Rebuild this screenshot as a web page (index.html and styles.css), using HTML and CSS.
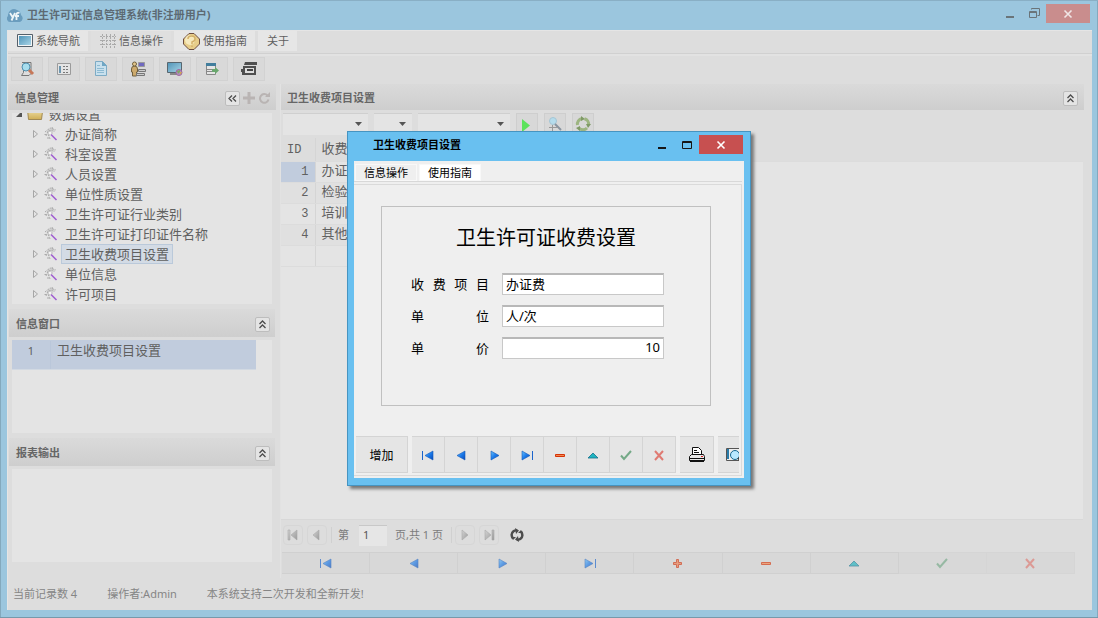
FILE: index.html
```html
<!DOCTYPE html>
<html lang="zh-CN">
<head>
<meta charset="utf-8">
<meta name="viewport" content="width=device-width, initial-scale=1">
<title>卫生许可证信息管理系统</title>
<link rel="stylesheet" href="styles.css">
</head>
<body>
<svg class="sprite" aria-hidden="true">
  <defs>
    <linearGradient id="blue" x1="0" y1="0" x2="1" y2="1"><stop offset="0" stop-color="#6cc4ff"/><stop offset=".5" stop-color="#1c7bea"/><stop offset="1" stop-color="#0a4ab8"/></linearGradient>
    <linearGradient id="screen" x1="0" y1="0" x2="1" y2="1"><stop offset="0" stop-color="#4f94b8"/><stop offset="1" stop-color="#a9d4e6"/></linearGradient>
    <linearGradient id="silver" x1="0" y1="0" x2="1" y2="1"><stop offset="0" stop-color="#d4d4d4"/><stop offset="1" stop-color="#9a9a9a"/></linearGradient>
    <linearGradient id="folder" x1="0" y1="0" x2="0" y2="1"><stop offset="0" stop-color="#efe0a8"/><stop offset="1" stop-color="#cfae55"/></linearGradient>
  </defs>
  <symbol id="first" viewBox="0 0 12 12"><path fill="#1a64cc" d="M0 2h1v9H0z"/><path fill="url(#blue)" stroke="#1358b8" stroke-width=".6" d="M11 2v9L3 6.500z"/></symbol>
  <symbol id="prev" viewBox="0 0 12 12"><path fill="url(#blue)" stroke="#1358b8" stroke-width=".6" d="M10 2v9L2 6.500z"/></symbol>
  <symbol id="next" viewBox="0 0 12 12"><path fill="url(#blue)" stroke="#1358b8" stroke-width=".6" d="M3 2v9L11 6.500z"/></symbol>
  <symbol id="last" viewBox="0 0 12 12"><path fill="#1a64cc" d="M11 2h1v9h-1z"/><path fill="url(#blue)" stroke="#1358b8" stroke-width=".6" d="M1 2v9l8-4.500z"/></symbol>
  <symbol id="plus" viewBox="0 0 12 12"><path fill="#f0804f" stroke="#cf3410" d="M4.500 2.500h2v3h3v2h-3v3h-2v-3h-3v-2h3z"/></symbol>
  <symbol id="minus" viewBox="0 0 12 12"><path fill="#f58a4f" stroke="#d43308" d="M1.500 5.500h9v2h-9z"/></symbol>
  <symbol id="up" viewBox="0 0 12 12"><path fill="#1fb4c0" stroke="#14708c" stroke-width=".8" d="M1 9L6 4l5 5z"/></symbol>
  <symbol id="check" viewBox="0 0 12 12"><path fill="none" stroke="#74a987" stroke-width="2" d="M1 6.500l3 3.500 7-8"/></symbol>
  <symbol id="cross" viewBox="0 0 12 12"><path fill="none" stroke="#df7a72" stroke-width="2" d="M2 2l8 9M10 2l-8 9"/></symbol>
  <symbol id="close" viewBox="0 0 10 10"><path fill="none" stroke="currentColor" stroke-width="1.600" d="M1.500 1.500l7 7M8.500 1.500l-7 7"/></symbol>
  <symbol id="minimize" viewBox="0 0 10 10"><path fill="currentColor" d="M1 7h8v2H1z"/></symbol>
  <symbol id="collapse" viewBox="0 0 9 9"><path fill="none" stroke="#4c4c4c" stroke-width="1.300" d="M1.500 4L4.500 1l3 3M1.500 8L4.500 5l3 3"/></symbol>
  <symbol id="wand" viewBox="0 0 16 16"><path fill="#d0d0d0" d="M5 3h4v1h3v2h-2v2H7v2H5V8H4V5h1z"/><path fill="none" stroke="#aaa" stroke-dasharray="2 1" d="M2 6l5-4 6 2M3 10l2-5 5-1M7 13l-2-5M1.500 8.500h2M4 12h2M9 1l1 3"/><path stroke="#a05fd0" stroke-width="1.600" d="M8 8.500l5.500 5.500"/><path fill="#f4f4f4" d="M6 6h2v2H6z"/></symbol>
  <symbol id="arrow" viewBox="0 0 8 8"><path fill="none" stroke="#a6a6a6" d="M2.500.5v7l4-3.500z"/></symbol>
  <symbol id="combo" viewBox="0 0 9 5"><path fill="#555" d="M1 0h7L4.500 4z"/></symbol>
</svg>

<div class="window">
  <header class="titlebar">
    <svg class="app-logo" viewBox="0 0 16 14" aria-hidden="true"><path fill="#6a9dbe" d="M3 13a3.500 3.500 0 0 1-2-6 6 6 0 0 1 9-6 6 6 0 0 1 4 5 4 4 0 0 1-1 7z"/><path fill="none" stroke="#edf5f8" stroke-width="1.800" d="M3 4l2.500 4M8 4L4.500 11.500M12.500 4q-3-1-3 2v5M8 7h4"/></svg>
    <h1>卫生许可证信息管理系统(非注册用户)</h1>
    <div class="caption">
      <button aria-label="最小化"><svg width="10" height="10"><use href="#minimize"/></svg></button>
      <button aria-label="还原"><svg width="11" height="11" viewBox="0 0 11 11"><path fill="none" stroke="currentColor" d="M.5 3.500h7v6h-7zM.5 4.500h7M2.500 1.500V.5h8v7h-2"/></svg></button>
      <button class="close" aria-label="关闭"><svg width="10" height="10"><use href="#close"/></svg></button>
    </div>
  </header>

  <div class="client">
    <nav class="menu">
      <button><svg width="16" height="14" viewBox="0 0 16 14"><path fill="#f5f5f5" stroke="#55606a" d="M.5.5h15v12H.5z"/><path fill="url(#screen)" d="M2 2h12v9H2z"/></svg>系统导航</button>
      <button class="active"><svg width="16" height="14" viewBox="0 0 16 14"><path fill="none" stroke="#aaa" stroke-dasharray="2 1" d="M2.500 0v14M6.500 0v14M10.500 0v14M14.500 0v14M0 2.500h16M0 6.500h16M0 10.500h16"/></svg>信息操作</button>
      <button><svg width="17" height="17" viewBox="0 0 17 17"><path fill="#e7cd8a" stroke="#6c4d40" d="M6 .5h5L16.500 6v5L11 16.500H6L.5 11V6z"/><circle cx="7" cy="7" r="5" fill="#f6e9bd"/><path fill="none" stroke="#d3b069" stroke-width="1.500" d="M5 6q0-3 3.500-3T12 6q0 2-3 3v2M9 12.500V14"/></svg>使用指南</button>
      <button>关于</button>
    </nav>

    <div class="toolbar">
      <button aria-label="查询"><svg viewBox="0 0 16 16"><path fill="#ddd" stroke="#777" d="M3 1.500h9v11l-2 2H2.500l2-3V3"/><circle cx="7" cy="6" r="4" fill="#a7dded" stroke="#4f8fae"/><path stroke="#c67859" stroke-width="3" d="M10 9l4 4"/></svg></button>
      <button aria-label="列表"><svg viewBox="0 0 16 16"><path fill="#e4e4e4" stroke="#9b9b9b" d="M1.500 2.500h13v11h-13z"/><path fill="#6d96af" d="M3 5h2v7H3z"/><path stroke="#777" stroke-dasharray="2 1" d="M7 5.500h6M7 8.500h6M7 11.500h6"/></svg></button>
      <button aria-label="文档"><svg viewBox="0 0 16 16"><path fill="#c8e0ed" stroke="#7dabc5" d="M2.500.5h7l4 4v10h-11z"/><path fill="#6fa6c4" d="M9 0l5 5H9z"/><path stroke="#8dbad2" d="M4 4.500h3M4 7.500h7M4 9.500h7M4 11.500h7"/></svg></button>
      <button aria-label="人员"><svg viewBox="0 0 16 16"><path fill="#cdaa6d" stroke="#71613f" d="M1.500 8q0-3 3-3t3 3v3h-1v4h-4v-4h-1z"/><circle cx="4.500" cy="3" r="2" fill="#e2c58a" stroke="#71613f"/><path fill="#7069c0" stroke="#999" d="M8.500 1.500h6v4h-6z"/><path fill="#ccc" stroke="#777" d="M8.500 8.500h7v2h-7zM6.500 12.500h8v2h-8z"/></svg></button>
      <button aria-label="网络"><svg viewBox="0 0 16 16"><path fill="url(#screen)" stroke="#58666f" d="M.5 1.500h14v10H.5z"/><path stroke="#888" stroke-width="2" d="M3 13h7"/><circle cx="12" cy="11.500" r="3" fill="#b28cc2" stroke="#9d679f"/><path fill="#7ea761" d="M10 10l3-1v2l-2 2z"/><path fill="#d1a750" d="M13 11h2l-2 3z"/></svg></button>
      <button aria-label="导出"><svg viewBox="0 0 16 16"><path fill="#e5e5e5" stroke="#888" d="M2.500 2.500h9v11h-9z"/><path fill="#427e9d" d="M2 2h10v3H2z"/><path stroke="#888" d="M3 8.500h5M3 10.500h5"/><path fill="#69a66d" d="M8 8h3V6l4 3.500-4 3.500v-2H8z"/></svg></button>
      <button aria-label="打印"><svg viewBox="0 0 16 16"><path fill="#4f4f4f" d="M4 1h12v3H3zM2 5h13v9H1v-3H0V8h2z"/><path fill="#ddd" d="M4 7h9v5H4z"/><path fill="#444" d="M6 8h6v2H6z"/></svg></button>
    </div>

    <main class="workspace">
      <aside class="sidebar">
        <section class="panel tree-panel">
          <div class="panel-head main-head"><h2>信息管理</h2>
            <div class="head-tools">
              <button class="mini" aria-label="收起"><svg width="9" height="9" viewBox="0 0 9 9"><path fill="none" stroke="#4c4c4c" stroke-width="1.300" d="M4 1.500l-3 3 3 3M8 1.500l-3 3 3 3"/></svg></button>
              <button class="bare" aria-label="添加"><svg width="12" height="12" viewBox="0 0 12 12"><path stroke="#b9b4b3" stroke-width="3" d="M6 0v12M0 6h12"/></svg></button>
              <button class="bare" aria-label="刷新"><svg width="12" height="12" viewBox="0 0 12 12"><path fill="none" stroke="#b9b4b3" stroke-width="2" d="M9.500 3.500a4.300 4.300 0 1 0 1 4"/><path fill="#b9b4b3" d="M7 5l5-5v5z"/></svg></button>
            </div>
          </div>
          <div class="panel-body tree-body">
            <ul class="tree">
              <li class="root"><svg class="root-arrow" viewBox="0 0 8 8"><path fill="#555" d="M7 1v6H1z"/></svg><svg class="node-icon" viewBox="0 0 16 16"><path fill="url(#folder)" stroke="#a08954" d="M.5 3.500h5l1 2h9l-1 8h-13z"/></svg><span>数据设置</span></li>
              <li><svg class="arrow"><use href="#arrow"/></svg><svg class="node-icon"><use href="#wand"/></svg><span>办证简称</span></li>
              <li><svg class="arrow"><use href="#arrow"/></svg><svg class="node-icon"><use href="#wand"/></svg><span>科室设置</span></li>
              <li><svg class="arrow"><use href="#arrow"/></svg><svg class="node-icon"><use href="#wand"/></svg><span>人员设置</span></li>
              <li><svg class="arrow"><use href="#arrow"/></svg><svg class="node-icon"><use href="#wand"/></svg><span>单位性质设置</span></li>
              <li><svg class="arrow"><use href="#arrow"/></svg><svg class="node-icon"><use href="#wand"/></svg><span>卫生许可证行业类别</span></li>
              <li><svg class="arrow"></svg><svg class="node-icon"><use href="#wand"/></svg><span>卫生许可证打印证件名称</span></li>
              <li><svg class="arrow"><use href="#arrow"/></svg><svg class="node-icon"><use href="#wand"/></svg><span class="selected">卫生收费项目设置</span></li>
              <li><svg class="arrow"><use href="#arrow"/></svg><svg class="node-icon"><use href="#wand"/></svg><span>单位信息</span></li>
              <li><svg class="arrow"><use href="#arrow"/></svg><svg class="node-icon"><use href="#wand"/></svg><span>许可项目</span></li>
            </ul>
          </div>
        </section>
        <section class="panel">
          <div class="panel-head sub-head"><h2>信息窗口</h2><button class="mini" aria-label="折叠"><svg width="9" height="9"><use href="#collapse"/></svg></button></div>
          <div class="panel-body"><div class="info-row"><span class="info-no">1</span><span class="info-name">卫生收费项目设置</span></div></div>
        </section>
        <section class="panel">
          <div class="panel-head sub-head"><h2>报表输出</h2><button class="mini" aria-label="折叠"><svg width="9" height="9"><use href="#collapse"/></svg></button></div>
          <div class="panel-body"></div>
        </section>
      </aside>

      <section class="content">
        <div class="panel-head main-head"><h2>卫生收费项目设置</h2><button class="mini" aria-label="折叠"><svg width="9" height="9"><use href="#collapse"/></svg></button></div>
        <div class="filters">
          <div class="combo combo-field"><select aria-label="字段"><option></option></select><svg><use href="#combo"/></svg></div>
          <div class="combo combo-op"><select aria-label="条件"><option></option></select><svg><use href="#combo"/></svg></div>
          <div class="combo combo-value"><select aria-label="值"><option></option></select><svg><use href="#combo"/></svg></div>
          <button aria-label="执行"><svg viewBox="0 0 16 16"><path fill="#5be35b" d="M3 3l8 6.500L3 16z"/></svg></button>
          <button aria-label="查找"><svg viewBox="0 0 16 16"><circle cx="6" cy="5" r="3.500" fill="#b5dcec" stroke="#a5c5d4"/><path stroke="#8894a0" stroke-width="2" d="M8 8l6 6"/><path stroke="#999" d="M5.500 9v6M2 11.500h9"/></svg></button>
          <button aria-label="刷新"><svg viewBox="0 0 16 16"><g fill="none" stroke="#9db581" stroke-width="3"><path d="M2.500 9A5.500 5.500 0 0 1 7 2.500M9.500 2.700A5.500 5.500 0 0 1 13.500 9M12 12a5.500 5.500 0 0 1-8 0"/></g><path fill="#7f9a66" d="M6 0l4 3-4 2zM16 8l-3 4-2-4zM5 10v5l-4-3z"/></svg></button>
        </div>
        <div class="grid">
          <table>
            <thead><tr><th class="id">ID</th><th class="name">收费</th><th class="rest"></th></tr></thead>
            <tbody>
              <tr><td class="id current">1</td><td>办证</td><td class="rest"></td></tr>
              <tr><td class="id">2</td><td>检验</td><td class="rest"></td></tr>
              <tr><td class="id">3</td><td>培训</td><td class="rest"></td></tr>
              <tr><td class="id">4</td><td>其他</td><td class="rest"></td></tr>
              <tr><td class="id"></td><td></td><td class="rest"></td></tr>
            </tbody>
          </table>
        </div>
        <div class="pager">
          <button aria-label="首页" disabled><svg viewBox="0 0 12 12"><path fill="url(#silver)" stroke="#aaa" stroke-width=".6" d="M1 1h2v10H1zM10 1v10L4 6z"/></svg></button>
          <button aria-label="上页" disabled><svg viewBox="0 0 12 12"><path fill="url(#silver)" stroke="#aaa" stroke-width=".6" d="M8 1v10L2 6z"/></svg></button>
          <label class="page-label" for="page">第</label>
          <input id="page" type="text" value="1">
          <span class="page-total">页,共 1 页</span>
          <button aria-label="下页" disabled><svg viewBox="0 0 12 12"><path fill="url(#silver)" stroke="#aaa" stroke-width=".6" d="M3 1v10l6-5z"/></svg></button>
          <button aria-label="末页" disabled><svg viewBox="0 0 12 12"><path fill="url(#silver)" stroke="#aaa" stroke-width=".6" d="M9 1h2v10H9zM2 1v10l6-5z"/></svg></button>
          <button class="reload" aria-label="重新载入"><svg viewBox="0 0 14 14"><path fill="none" stroke="#4d4d4d" stroke-width="2.400" d="M3 10.500Q0 6 3.500 3.200 5 2 7 2.500M11 3.500q3 4.500-.5 7.300Q9 12 7 11.500"/><path fill="#4d4d4d" d="M5 0l4 2.500L6 6zM9 14l-4-2.500L8 8zM1 9h5l-3 3zM13 5H8l3-3z"/></svg></button>
        </div>
        <div class="record-nav">
          <button aria-label="首条"><svg><use href="#first"/></svg></button>
          <button aria-label="上一条"><svg><use href="#prev"/></svg></button>
          <button aria-label="下一条"><svg><use href="#next"/></svg></button>
          <button aria-label="末条"><svg><use href="#last"/></svg></button>
          <button aria-label="新增"><svg><use href="#plus"/></svg></button>
          <button aria-label="删除"><svg><use href="#minus"/></svg></button>
          <button aria-label="编辑"><svg><use href="#up"/></svg></button>
          <button aria-label="确认" disabled><svg><use href="#check"/></svg></button>
          <button aria-label="取消" disabled><svg><use href="#cross"/></svg></button>
        </div>
      </section>
    </main>

    <footer class="status"><span>当前记录数 4</span><span>操作者:Admin</span><span>本系统支持二次开发和全新开发!</span></footer>
  </div>
</div>

<div class="dialog" role="dialog" aria-labelledby="dialog-title">
  <header class="dialog-title">
    <h2 id="dialog-title">卫生收费项目设置</h2>
    <div class="caption">
      <button aria-label="最小化"><svg width="10" height="10"><use href="#minimize"/></svg></button>
      <button aria-label="最大化"><svg width="10" height="8" viewBox="0 0 10 8"><path fill="none" stroke="currentColor" d="M.5.5h9v7h-9zM.5 1.500h9"/></svg></button>
      <button class="close" aria-label="关闭"><svg width="10" height="10"><use href="#close"/></svg></button>
    </div>
  </header>
  <div class="dialog-client">
    <nav class="dialog-tabs"><button>信息操作</button><button class="active">使用指南</button></nav>
    <div class="dialog-page">
      <form class="fee-form">
        <h3>卫生许可证收费设置</h3>
        <div class="field"><label for="item">收费项目</label><input id="item" type="text" value="办证费"></div>
        <div class="field"><label for="unit">单位</label><input id="unit" type="text" value="人/次"></div>
        <div class="field"><label for="price">单价</label><input id="price" class="number" type="text" value="10"></div>
      </form>
      <div class="dialog-actions">
        <button class="add">增加</button>
        <div class="nav-group">
          <button aria-label="首条"><svg><use href="#first"/></svg></button>
          <button aria-label="上一条"><svg><use href="#prev"/></svg></button>
          <button aria-label="下一条"><svg><use href="#next"/></svg></button>
          <button aria-label="末条"><svg><use href="#last"/></svg></button>
          <button aria-label="删除"><svg><use href="#minus"/></svg></button>
          <button aria-label="编辑"><svg><use href="#up"/></svg></button>
          <button aria-label="确认" disabled><svg><use href="#check"/></svg></button>
          <button aria-label="取消" disabled><svg><use href="#cross"/></svg></button>
        </div>
        <button class="print" aria-label="打印"><svg viewBox="0 0 16 16"><path fill="#fff" stroke="#111" d="M3.500 8V.5h6l3 3V8"/><path fill="#e8e8e8" stroke="#111" d="M2.500 7.500h12l1 2v4H.5v-4z"/><path fill="none" stroke="#111" d="M5 3.500h3M5 5.500h5M1 11.500h14M1 14.500h14"/><path fill="#d22" d="M12 9h2v1h-2z"/></svg></button>
        <button class="preview" aria-label="预览"><svg viewBox="0 0 16 16"><path fill="#eee" stroke="#555" d="M.5 1.500h15v12H.5z"/><path fill="#2a7ba8" d="M1 2h2v10H1z"/><circle cx="9" cy="8" r="4.500" fill="#b8e8ff" stroke="#17678f"/><path stroke="#444" stroke-width="2" d="M12 11l3 3"/></svg></button>
      </div>
    </div>
  </div>
</div>
</body>
</html>
```

FILE: styles.css
```css
* { box-sizing: border-box; }

body {
  margin: 0;
  font: 11px/16px "Noto Sans", "Noto Sans CJK SC", sans-serif;
  color: #606060;
}

h1, h2, h3, ul { margin: 0; padding: 0; font-size: inherit; }
button, input, select { font: inherit; color: inherit; margin: 0; padding: 0; border: 0; border-radius: 0; }
button { background: none; display: flex; align-items: center; justify-content: center; }
svg { display: block; flex: none; }
.sprite { position: absolute; width: 0; height: 0; }

/* Main window */
.window {
  min-height: 100vh;
  display: flex;
  flex-direction: column;
  padding: 0 6px 7px 7px;
  background: #9bc6de;
  border-top: 1px solid #89afc5;
  border-bottom: 1px solid #7699ab;
  box-shadow: inset 1px 0 #84a9bd, inset -1px 0 #84a9bd;
}

.titlebar { height: 29px; display: flex; align-items: center; gap: 4px; }
.titlebar h1 { flex: 1; padding-bottom: 2px; font-weight: 700; color: #5d6a73; }
.app-logo { width: 16px; height: 14px; }
.caption { display: flex; color: #6a7479; }
.caption button { width: 24px; height: 19px; }
.caption .close { width: 44px; background: #c98d8d; color: #f0e6e6; }
.titlebar .caption { align-self: flex-start; padding: 3px 2px 0 0; }

.client {
  flex: 1;
  display: flex;
  flex-direction: column;
  background: #dddddd;
  border: 1px solid #e5e5e5;
  border-width: 1px 0 0 1px;
}

.menu {
  display: flex;
  gap: 3px;
  height: 23px;
  border-bottom: 1px solid #d0d0d0;
  box-shadow: 0 2px #e2e2e2;
}
.menu button { height: 20px; padding: 0 8px 0 9px; gap: 3px; background: #e6e6e6; }
.menu button.active { background: #dfdfdf; }

.toolbar { display: flex; gap: 5px; padding: 3px; }
.toolbar button { width: 32px; height: 24px; background: #d9d9d9; border: 1px solid #d2d2d2; }
.toolbar svg { width: 16px; height: 16px; }

.workspace { flex: 1; display: flex; gap: 4px; padding-right: 8px; }

.panel-head {
  display: flex;
  align-items: center;
  justify-content: space-between;
  background: linear-gradient(#dadada, #cecece);
}
.panel-head h2 { font-weight: 700; color: #666; }
.main-head { height: 26px; padding: 2px 6px 0 7px; }
.sub-head { height: 28px; padding: 2px 5px 0 7px; margin: 0 1px; }
.mini {
  width: 15px;
  height: 15px;
  background: #e4e4e4;
  border: 1px solid #bdbdbd;
  border-radius: 2px;
}
.bare { width: 12px; height: 15px; }
.head-tools { display: flex; gap: 3px; }

.sidebar { width: 268px; display: flex; flex-direction: column; gap: 5px; padding-bottom: 16px; }
.panel { display: flex; flex-direction: column; gap: 3px; }
.panel-body { height: 93px; margin: 0 4px; background: #e4e4e4; }
.tree-panel { flex: 1; }
.tree-body { flex: 1 1 190px; height: auto; overflow: hidden; }

.tree { list-style: none; margin-top: -9px; font-size: 13px; line-height: 18px; }
.tree li { display: flex; align-items: center; height: 20px; padding-left: 19px; }
.tree span { padding: 0 3px; border: 1px solid transparent; }
.tree .selected { background: #d3dbe5; border-color: #bac9da; }
.arrow { width: 8px; height: 8px; margin-right: 4px; }
.node-icon { width: 16px; height: 16px; margin-right: 2px; }
.tree .root { padding-left: 3px; }
.root-arrow { width: 8px; height: 8px; margin-right: 4px; }

.info-row {
  display: flex;
  margin-right: 16px;
  height: 30px;
  padding-top: 1px;
  line-height: 19px;
  background: #c1ccdd;
  border-bottom: 1px solid #d2d9e2;
}
.info-no { width: 39px; text-align: center; border-right: 1px solid #bac7da; }
.info-name { padding-left: 6px; font-size: 13px; }

/* Content */
.content { flex: 1; min-width: 0; display: flex; flex-direction: column; border-left: 1px solid #e2e2e2; }
.content .main-head { padding-left: 6px; }
.filters { display: flex; gap: 6px; padding: 3px 2px; height: 28px; }
.combo { display: flex; align-items: center; background: #e4e4e4; border-top: 1px solid #cfcfcf; height: 22px; }
.combo select { flex: 1; min-width: 0; height: 20px; background: transparent; appearance: none; }
.combo svg { width: 9px; height: 5px; margin-right: 5px; }
.combo-field { width: 85px; }
.combo-op { width: 38px; }
.combo-value { width: 92px; }
.filters button { width: 22px; height: 22px; background: #d8d8d8; border: 1px solid #cecece; }
.filters button svg { width: 16px; height: 16px; }

.grid { flex: 1; margin-right: 1px; background: #e4e4e4; border-bottom: 1px solid #d8d8d8; }
.grid table { width: 100%; border-collapse: collapse; table-layout: fixed; font: 13px/20px "Liberation Mono", "Noto Sans CJK SC", monospace; }
.grid th { height: 23px; padding: 2px 6px 0; font-weight: 400; text-align: left; background: #dddddd; }
.grid td { height: 21px; padding: 0 6px; }
.grid th, .grid td { border-bottom: 1px solid #dcdcdc; }
.grid .id { width: 34px; border-right: 1px solid #d5d5d5; font-size: 12px; }
.grid .name { width: 140px; }
.grid td.id { text-align: right; }
.grid tbody tr:nth-child(even) td { background: #e0e0e0; }
.grid tbody tr .rest.rest { background: #e4e4e4; border-bottom: 0; }
.grid .current { background: #c1ccdd; }

.pager { display: flex; align-items: center; height: 30px; padding-left: 2px; color: #7c7c7c; }
.pager button { width: 20px; height: 20px; margin-right: 4px; border: 1px solid #d6d6d6; border-radius: 4px; }
.pager .reload { border: 0; margin-left: 4px; }
.pager svg { width: 12px; height: 12px; }
.pager .reload svg { width: 14px; height: 14px; }
.page-label { padding: 0 10px 0 6px; border-left: 1px solid #d0d0d0; }
.pager input { width: 28px; height: 21px; padding: 0 0 2px 4px; background: #e6e6e6; border-top: 1px solid #c8c8c8; color: #555; }
.page-total { padding: 0 8px; margin-right: 3px; border-right: 1px solid #d0d0d0; }

.record-nav { display: flex; margin: 2px 9px 4px 1px; }
.record-nav button { flex: 1; height: 22px; background: #d8d8d8; border: 1px solid #d0d0d0; border-width: 1px 1px 1px 0; }
.record-nav button:disabled { border-color: #d5d5d5; }
.record-nav svg { width: 12px; height: 12px; opacity: .65; }

.status { display: flex; gap: 30px; height: 32px; padding: 8px 5px; color: #858585; }

/* Dialog */
.dialog {
  position: absolute;
  left: calc(50% - 202px);
  top: 131px;
  width: 404px;
  padding: 0 6px 7px;
  background: #69c0f0;
  border: 1px solid #4694c1;
  box-shadow: 3px 3px 3px #777;
  color: #000;
}
.dialog-title { display: flex; height: 29px; padding: 3px 1px 0 19px; }
.dialog-title h2 { flex: 1; font-weight: 700; line-height: 20px; }
.dialog .caption { color: #161616; }
.dialog .caption button { width: 25px; }
.dialog .caption .close { width: 44px; background: #c75050; color: #fff; }
.dialog-client { background: #efefef; padding: 3px 2px 2px 0; }
.dialog-tabs { display: flex; gap: 2px; padding-left: 1px; border-bottom: 1px solid #d8d8d8; }
.dialog-tabs button { height: 17px; width: 62px; border: 1px solid #f8f8f8; }
.dialog-tabs .active { background: #fff; }
.dialog-page {
  margin-top: 2px;
  padding: 21px 2px 2px;
  border: 1px solid #dadada;
  border-width: 1px 1px 1px 0;
}
.fee-form { margin: 0 28px 30px 25px; height: 200px; border: 1px solid #c0c0c0; padding: 18px 0 0; }
.fee-form h3 { font: 400 20px/24px "Noto Sans CJK SC", sans-serif; text-align: center; margin-bottom: 24px; }
.field { display: flex; align-items: center; gap: 13px; height: 22px; margin: 0 0 10px 29px; font-size: 13px; }
.field label { width: 78px; text-align-last: justify; }
.field input { width: 162px; height: 22px; padding: 0 3px 3px; background: #fff; border: 1px solid #c8c8c8; border-top: 2px solid #b8b8b8; }
.field .number { text-align: right; }

.dialog-actions { display: flex; overflow: hidden; gap: 4px; }
.dialog-actions button { height: 37px; flex: none; background: #e5e5e5; border: 1px solid #d4d4d4; border-width: 1px 1px 1px 0; }
.dialog-actions .add { width: 52px; padding-top: 3px; font-size: 12px; }
.nav-group { display: flex; }
.nav-group button { width: 33px; }
.dialog-actions svg { width: 12px; height: 12px; }
.dialog-actions .print, .dialog-actions .preview { width: 34px; }
.dialog-actions .preview { justify-content: flex-start; padding-left: 8px; }
.dialog-actions .print svg, .dialog-actions .preview svg { width: 16px; height: 16px; }
```
